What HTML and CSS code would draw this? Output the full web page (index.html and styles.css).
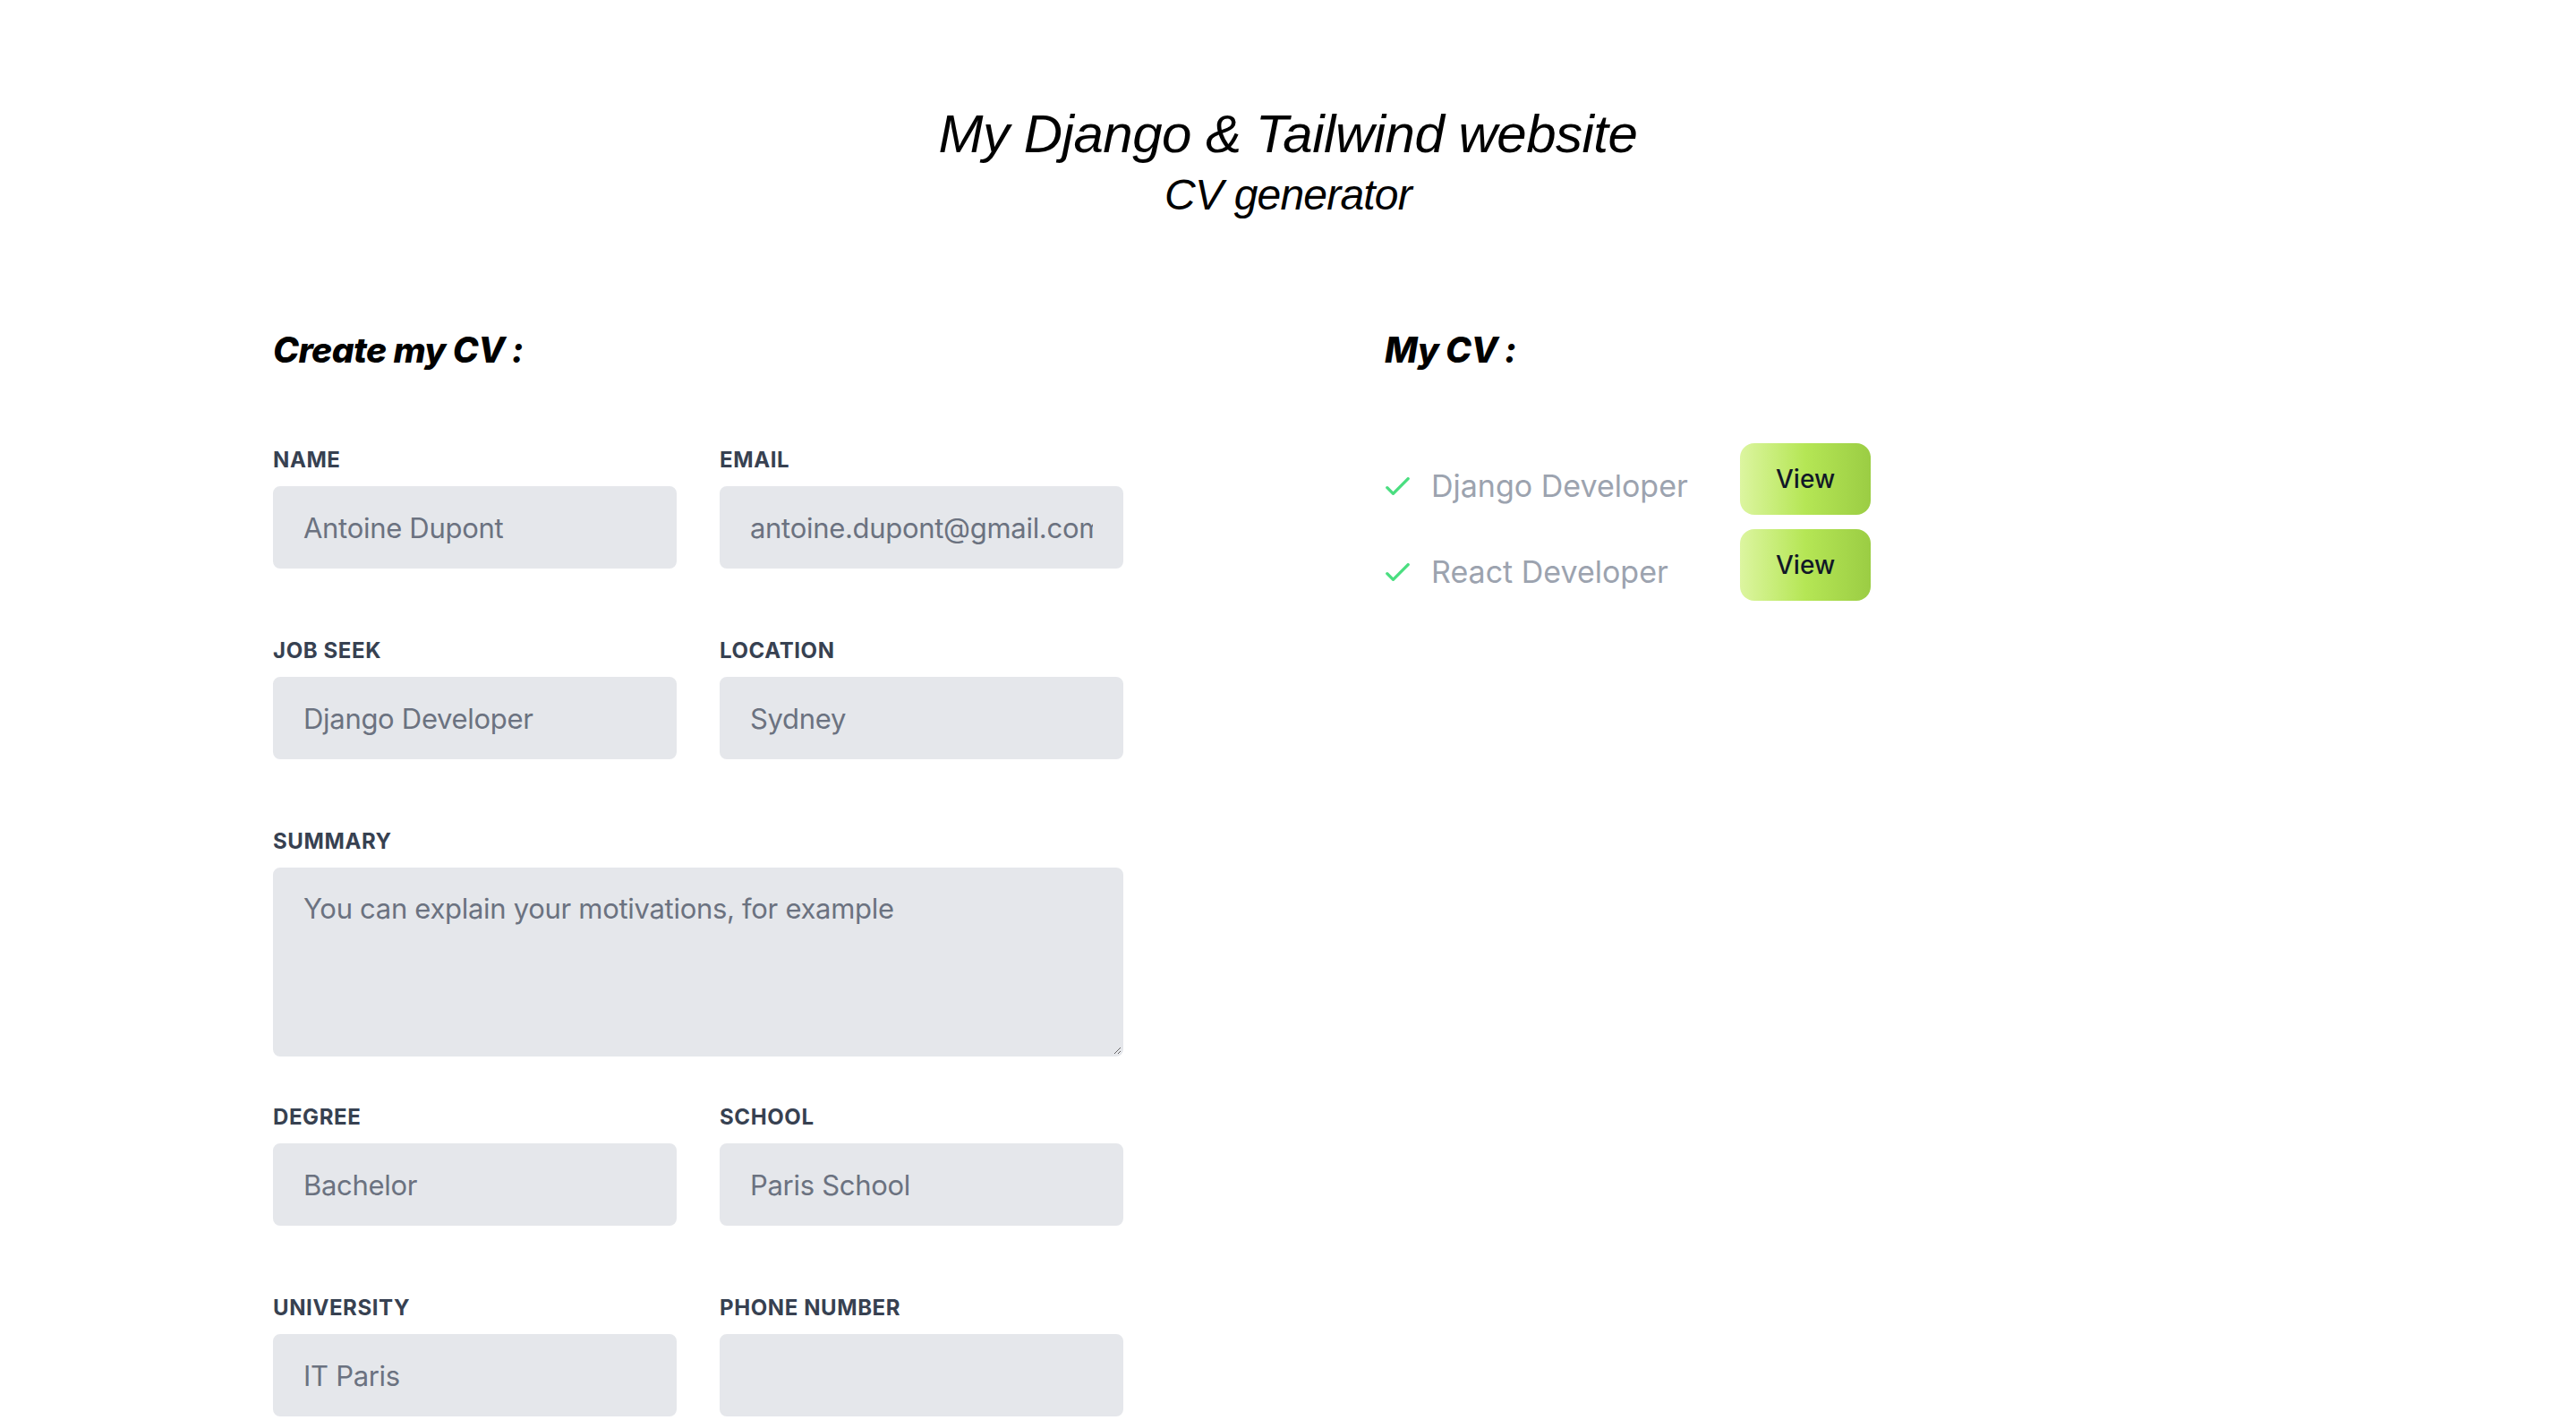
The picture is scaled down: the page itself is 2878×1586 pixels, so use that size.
FILE: index.html
```html
<!DOCTYPE html>
<html lang="en">
<head>
<meta charset="utf-8">
<title>My Django &amp; Tailwind website</title>
<link rel="stylesheet" href="styles.css">
</head>
<body>
<header class="site-header">
  <h1 class="site-title">My Django &amp; Tailwind website</h1>
  <h2 class="site-subtitle">CV generator</h2>
</header>
<main class="columns">
  <section class="create">
    <h3 class="section-title">Create my CV :</h3>
    <form class="cv-form">
      <div class="row">
        <div class="field">
          <label class="label">Name</label>
          <input class="input" type="text" value="Antoine Dupont">
        </div>
        <div class="field">
          <label class="label">Email</label>
          <input class="input" type="text" value="antoine.dupont@gmail.com">
        </div>
      </div>
      <div class="row">
        <div class="field">
          <label class="label">Job seek</label>
          <input class="input" type="text" value="Django Developer">
        </div>
        <div class="field">
          <label class="label">Location</label>
          <input class="input" type="text" value="Sydney">
        </div>
      </div>
      <div class="row">
        <div class="field">
          <label class="label">Summary</label>
          <textarea class="input textarea">You can explain your motivations, for example</textarea>
        </div>
      </div>
      <div class="row">
        <div class="field">
          <label class="label">Degree</label>
          <input class="input" type="text" value="Bachelor">
        </div>
        <div class="field">
          <label class="label">School</label>
          <input class="input" type="text" value="Paris School">
        </div>
      </div>
      <div class="row">
        <div class="field">
          <label class="label">University</label>
          <input class="input" type="text" value="IT Paris">
        </div>
        <div class="field">
          <label class="label">Phone number</label>
          <input class="input" type="text" value="">
        </div>
      </div>
    </form>
  </section>
  <section class="my-cv">
    <h3 class="section-title">My CV :</h3>
    <ul class="cv-list">
      <li class="cv-row">
        <span class="cv-item">
          <svg class="check" viewBox="4 6 16 12" width="27" height="20" fill="none" stroke="#4ade80" stroke-width="2" stroke-linecap="round" stroke-linejoin="round"><path d="M5 13l4 4L19 7"/></svg>
          <span class="cv-name">Django Developer</span>
        </span>
        <button class="btn-view" type="button">View</button>
      </li>
      <li class="cv-row">
        <span class="cv-item">
          <svg class="check" viewBox="4 6 16 12" width="27" height="20" fill="none" stroke="#4ade80" stroke-width="2" stroke-linecap="round" stroke-linejoin="round"><path d="M5 13l4 4L19 7"/></svg>
          <span class="cv-name">React Developer</span>
        </span>
        <button class="btn-view" type="button">View</button>
      </li>
    </ul>
  </section>
</main>
</body>
</html>
```

FILE: styles.css
```css
html, body {
  margin: 0;
  padding: 0;
  background: #ffffff;
  overflow: hidden;
}

body {
  font-family: Inter, "Noto Sans", sans-serif;
  color: #000;
}

.site-header {
  padding-top: 114px;
  text-align: center;
}

.site-title {
  margin: 0;
  font-family: "Liberation Sans", Arial, sans-serif;
  font-style: italic;
  font-weight: 400;
  font-size: 60px;
  line-height: 72px;
  letter-spacing: -0.5px;
}

.site-subtitle {
  margin: 0;
  font-family: "Liberation Sans", Arial, sans-serif;
  font-style: italic;
  font-weight: 400;
  font-size: 48px;
  line-height: 64px;
  letter-spacing: -0.8px;
}

.columns {
  display: flex;
  align-items: flex-start;
  gap: 292px;
  padding: 113px 305px 0 305px;
}

.create {
  width: 950px;
  flex: none;
}

.section-title {
  margin: 0 0 76px 0;
  font-family: Inter, sans-serif;
  font-style: italic;
  font-weight: 800;
  font-size: 39px;
  line-height: 56px;
  letter-spacing: -0.6px;
}

.cv-form {
  margin: 0;
}

.row {
  display: flex;
  gap: 48px;
  margin-bottom: 49px;
}

.field {
  flex: 1;
  min-width: 0;
}

.label {
  display: block;
  padding-top: 3px;
  margin-bottom: 13px;
  font-family: Inter, sans-serif;
  font-size: 24px;
  line-height: 32px;
  font-weight: 700;
  text-transform: uppercase;
  letter-spacing: 0.6px;
  color: #374151;
}

.input {
  display: block;
  box-sizing: border-box;
  width: 100%;
  height: 92px;
  margin: 0 0 24px 0;
  padding: 24px 32px;
  background: #e5e7eb;
  border: 2px solid #e5e7eb;
  border-radius: 8px;
  font-family: Inter, sans-serif;
  font-size: 31px;
  line-height: 40px;
  letter-spacing: -0.3px;
  color: #6b7280;
  outline: none;
  appearance: none;
}

.textarea {
  height: 211px;
  margin-bottom: 0;
  resize: vertical;
}

.my-cv {
  flex: none;
}

.cv-list {
  list-style: none;
  margin: 0;
  padding: 0;
}

.cv-row {
  display: flex;
  align-items: center;
}

.cv-item {
  display: flex;
  align-items: center;
  width: 397px;
  flex: none;
}

.check {
  display: block;
  margin-left: 1px;
  margin-right: 24px;
}

.cv-name {
  font-family: Inter, sans-serif;
  font-size: 34px;
  line-height: 48px;
  color: #9ca3af;
}

.btn-view {
  display: block;
  margin: 0 0 16px 0;
  padding: 20px 40px;
  border: none;
  border-radius: 16px;
  background: linear-gradient(to right, #dcf5a0 0%, #b5e655 50%, #9bcd44 100%);
  font-family: Inter, sans-serif;
  font-size: 28px;
  line-height: 40px;
  font-weight: 500;
  color: #111827;
  cursor: pointer;
}
```
